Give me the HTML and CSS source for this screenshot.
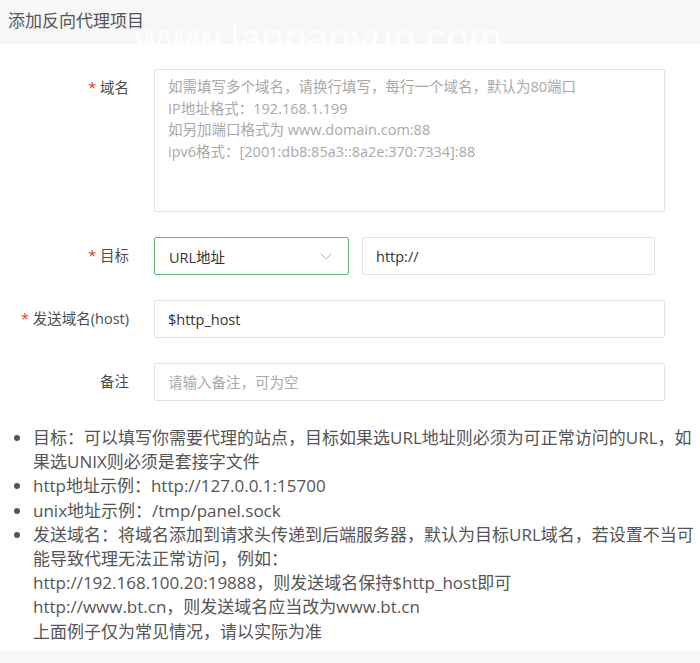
FILE: index.html
```html
<!DOCTYPE html>
<html lang="zh-CN">
<head>
  <meta charset="UTF-8" />
  <meta name="viewport" content="width=device-width, initial-scale=1.0"/>
  <title>添加反向代理项目</title>
  <link rel="stylesheet" href="styles.css">
</head>
<body>
  <div class="layer-title">添加反向代理项目</div>
  <div class="watermark">www.lanpanyun.com</div>

  <div class="proxy-form">
    <div class="form-row">
      <label class="form-label"><span class="req">*</span> 域名</label>
      <textarea class="form-textarea" placeholder="如需填写多个域名，请换行填写，每行一个域名，默认为80端口&#10;IP地址格式：192.168.1.199&#10;如另加端口格式为 www.domain.com:88&#10;ipv6格式：[2001:db8:85a3::8a2e:370:7334]:88"></textarea>
    </div>

    <div class="form-row">
      <label class="form-label"><span class="req">*</span> 目标</label>
      <div class="target-group">
        <div class="form-select">
          <span>URL地址</span>
          <svg class="select-arrow" width="12" height="7" viewBox="0 0 12 7">
            <path d="M0.5 0.5 L6 6 L11.5 0.5" fill="none" stroke="#b5b5b5" stroke-width="1"/>
          </svg>
        </div>
        <input class="form-input target-url" type="text" value="http://" />
      </div>
    </div>

    <div class="form-row">
      <label class="form-label"><span class="req">*</span> 发送域名(host)</label>
      <input class="form-input" type="text" value="$http_host" />
    </div>

    <div class="form-row">
      <label class="form-label">备注</label>
      <input class="form-input" type="text" placeholder="请输入备注，可为空" />
    </div>
  </div>

  <ul class="help-list">
    <li>目标：可以填写你需要代理的站点，目标如果选URL地址则必须为可正常访问的URL，如果选UNIX则必须是套接字文件</li>
    <li>http地址示例：http://127.0.0.1:15700</li>
    <li>unix地址示例：/tmp/panel.sock</li>
    <li>发送域名：将域名添加到请求头传递到后端服务器，默认为目标URL域名，若设置不当可能导致代理无法正常访问，例如：<br>http://192.168.100.20:19888，则发送域名保持$http_host即可<br>http://www.bt.cn，则发送域名应当改为www.bt.cn<br>上面例子仅为常见情况，请以实际为准</li>
  </ul>

  <div class="layer-footer"></div>
</body>
</html>
```

FILE: styles.css
```css
* {
  margin: 0;
  padding: 0;
  box-sizing: border-box;
}

body {
  font-family: 'Open Sans', 'Noto Sans CJK SC', sans-serif;
  background-color: #fff;
  color: #555;
  width: 700px;
  height: 663px;
  overflow: hidden;
  position: relative;
}

.layer-title {
  height: 44px;
  line-height: 42px;
  padding-left: 8px;
  font-size: 17px;
  color: #555;
  background-color: #f7f7f7;
}

/* site watermark laid over the title bar */
.watermark {
  position: absolute;
  top: 16px;
  left: 135px;
  font-family: 'Liberation Sans', sans-serif;
  font-size: 40px;
  color: rgba(255, 255, 255, 0.75);
  pointer-events: none;
}

.proxy-form {
  padding-top: 25px;
  display: flex;
  flex-direction: column;
  gap: 25px;
}

.form-row {
  display: grid;
  grid-template-columns: 129px 511px;
  column-gap: 25px;
  align-items: start;
}

.form-label {
  text-align: right;
  font-size: 14.5px;
  line-height: 38px;
  color: #4d4d4d;
}

.req {
  color: #e33;
}

.form-textarea,
.form-input {
  font-family: inherit;
  font-size: 14.5px;
  color: #333;
  border: 1px solid #e2e2e2;
  border-radius: 2px;
  background-color: #fff;
  outline: none;
}

.form-textarea {
  height: 143px;
  padding: 6px 13px;
  line-height: 21.7px;
  resize: none;
}

.form-input {
  height: 38px;
  padding: 0 13px;
}

.form-textarea::placeholder,
.form-input::placeholder {
  color: #a9a9a9;
}

.target-group {
  display: flex;
  gap: 13px;
}

.form-select {
  width: 195px;
  height: 38px;
  border: 1px solid #5fb86d;
  border-radius: 2px;
  display: flex;
  align-items: center;
  justify-content: space-between;
  padding: 0 16px 0 14px;
  font-size: 14.5px;
  color: #333;
}

.select-arrow {
  margin-top: 1px;
}

.target-url {
  width: 293px;
}

.help-list {
  margin-top: 25px;
  padding-left: 33px;
  padding-right: 2px;
  font-size: 17px;
  line-height: 24.2px;
  color: #555;
}

.layer-footer {
  position: absolute;
  left: 0;
  right: 0;
  bottom: 0;
  height: 12px;
  background-color: #f7f7f7;
}
```
